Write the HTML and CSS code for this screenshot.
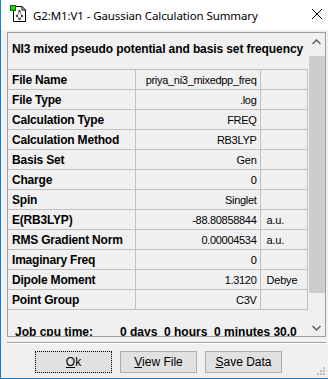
FILE: index.html
```html
<!DOCTYPE html>
<html lang="en">
<head>
    <meta charset="UTF-8">
    <meta name="viewport" content="width=device-width, initial-scale=1.0">
    <title>Gaussian Calculation Summary</title>
    <link rel="stylesheet" href="styles.css">
</head>
<body>
    <div class="window">
        <div class="titlebar">
            <svg class="app-icon" width="18" height="18" viewBox="0 0 18 18">
                <path d="M3.5 1.5 H12 L15.5 5 V16.5 H3.5 Z" fill="#fff" stroke="#000" />
                <path d="M12 1.5 V5 H15.5" fill="none" stroke="#000" />
                <line x1="9.5" y1="6" x2="7" y2="11" stroke="#777" />
                <line x1="9.5" y1="6" x2="12" y2="11" stroke="#777" />
                <line x1="7" y1="11" x2="9.5" y2="14" stroke="#777" />
                <line x1="12" y1="11" x2="9.5" y2="14" stroke="#777" />
                <rect x="8.5" y="5" width="2" height="2" fill="#444" />
                <rect x="6" y="10" width="2" height="2" fill="#444" />
                <rect x="11" y="10" width="2" height="2" fill="#444" />
                <rect x="8.5" y="13" width="2" height="2" fill="#444" />
                <rect x="0.5" y="0.5" width="5" height="5" fill="#1ed21e" stroke="#0a6a0a" />
            </svg>
            <span class="title">G2:M1:V1 - Gaussian Calculation Summary</span>
            <svg class="close" width="10" height="10" viewBox="0 0 10 10">
                <path d="M0 0 L10 10 M10 0 L0 10" stroke="#000" stroke-width="1" />
            </svg>
        </div>

        <div class="client">
            <div class="panel">
                <div class="content">
                    <div class="heading">NI3 mixed pseudo potential and basis set frequency</div>
                    <table class="summary">
                        <tr><td class="label">File Name</td><td class="value">priya_ni3_mixedpp_freq</td><td class="unit"></td></tr>
                        <tr><td class="label">File Type</td><td class="value">.log</td><td class="unit"></td></tr>
                        <tr><td class="label">Calculation Type</td><td class="value">FREQ</td><td class="unit"></td></tr>
                        <tr><td class="label">Calculation Method</td><td class="value">RB3LYP</td><td class="unit"></td></tr>
                        <tr><td class="label">Basis Set</td><td class="value">Gen</td><td class="unit"></td></tr>
                        <tr><td class="label">Charge</td><td class="value">0</td><td class="unit"></td></tr>
                        <tr><td class="label">Spin</td><td class="value">Singlet</td><td class="unit"></td></tr>
                        <tr><td class="label">E(RB3LYP)</td><td class="value">-88.80858844</td><td class="unit">a.u.</td></tr>
                        <tr><td class="label">RMS Gradient Norm</td><td class="value">0.00004534</td><td class="unit">a.u.</td></tr>
                        <tr><td class="label">Imaginary Freq</td><td class="value">0</td><td class="unit"></td></tr>
                        <tr><td class="label">Dipole Moment</td><td class="value">1.3120</td><td class="unit">Debye</td></tr>
                        <tr><td class="label">Point Group</td><td class="value">C3V</td><td class="unit"></td></tr>
                    </table>
                    <div class="cpu">
                        <span class="cpu-label">Job cpu time:</span>
                        <span class="cpu-value">0 days  0 hours  0 minutes 30.0</span>
                    </div>
                </div>
                <div class="scrollbar">
                    <div class="arrow">
                        <svg width="9" height="6" viewBox="0 0 9 6"><polyline points="0.5,5 4.5,1 8.5,5" fill="none" stroke="#606060" stroke-width="1.5" /></svg>
                    </div>
                    <div class="track"><div class="thumb"></div></div>
                    <div class="arrow">
                        <svg width="9" height="6" viewBox="0 0 9 6"><polyline points="0.5,1 4.5,5 8.5,1" fill="none" stroke="#606060" stroke-width="1.5" /></svg>
                    </div>
                </div>
            </div>

            <div class="separator"></div>

            <div class="buttons">
                <button class="btn focused"><u>O</u>k</button>
                <button class="btn"><u>V</u>iew File</button>
                <button class="btn"><u>S</u>ave Data</button>
            </div>

            <svg class="grip" width="10" height="10" viewBox="0 0 10 10">
                <rect x="8" y="2" width="2" height="2" fill="#bcbcbc" />
                <rect x="5" y="5" width="2" height="2" fill="#bcbcbc" />
                <rect x="8" y="5" width="2" height="2" fill="#bcbcbc" />
                <rect x="2" y="8" width="2" height="2" fill="#bcbcbc" />
                <rect x="5" y="8" width="2" height="2" fill="#bcbcbc" />
                <rect x="8" y="8" width="2" height="2" fill="#bcbcbc" />
            </svg>
        </div>
    </div>
</body>
</html>
```

FILE: styles.css
```css
:root {
    --face: #f0f0f0;
    --grid: #c0c0c0;
    --edge: #a0a0a0;
    --accent: #1979ca;
}

* {
    box-sizing: border-box;
}

body {
    margin: 0;
    background: var(--face);
    font-family: "Liberation Sans", Arial, sans-serif;
    color: #000;
}

.window {
    width: 328px;
    height: 379px;
    border-left: 1px solid var(--accent);
    border-bottom: 1px solid var(--accent);
    display: flex;
    flex-direction: column;
}

.titlebar {
    height: 30px;
    background: #fff;
    display: flex;
    align-items: center;
    padding-left: 9px;
}

.app-icon {
    margin-top: -3px;
}

.title {
    margin-left: 5px;
    font-family: "Noto Sans", sans-serif;
    font-size: 11.5px;
    letter-spacing: -0.1px;
    flex-grow: 1;
}

.close {
    margin-right: 6px;
    margin-top: -2px;
}

.client {
    position: relative;
    flex-grow: 1;
    padding: 2px 2px 0 6px;
}

.panel {
    height: 305px;
    border: 1px solid var(--edge);
    display: flex;
}

.content {
    flex-grow: 1;
    overflow: hidden;
}

.heading {
    height: 36px;
    padding-top: 9px;
    line-height: 14px;
    font-size: 12px;
    font-weight: bold;
    letter-spacing: -0.1px;
    text-align: center;
    padding-right: 1px;
}

.summary {
    border-collapse: collapse;
    width: 300px;
    table-layout: fixed;
    border-top: 1px solid var(--grid);
}

.summary td {
    height: 20px;
    padding: 0;
    border-right: 1px solid var(--grid);
    border-bottom: 1px solid var(--grid);
    white-space: nowrap;
    overflow: hidden;
}

.label {
    width: 127px;
    padding-left: 4px !important;
    font-size: 12px;
    font-weight: bold;
    letter-spacing: -0.2px;
}

.value {
    width: 125px;
    padding-right: 3px !important;
    text-align: right;
    font-size: 11px;
    letter-spacing: -0.3px;
}

.unit {
    padding-left: 6px !important;
    font-size: 11px;
    letter-spacing: -0.2px;
}

.cpu {
    margin-top: 15px;
    padding-left: 7px;
    display: flex;
    line-height: 14px;
    font-size: 12px;
    font-weight: bold;
    white-space: pre;
}

.cpu-label {
    width: 105px;
}

.scrollbar {
    width: 17px;
    display: flex;
    flex-direction: column;
}

.arrow {
    height: 17px;
    display: flex;
    align-items: center;
    justify-content: center;
}

.track {
    flex-grow: 1;
    padding: 6px 0 0 1px;
}

.thumb {
    height: 237px;
    background: #cdcdcd;
}

.separator {
    margin-top: 5px;
    height: 2px;
    border-top: 1px solid var(--edge);
    border-bottom: 1px solid #fff;
}

.buttons {
    margin-top: 7px;
    padding-left: 28px;
    display: flex;
    gap: 8px;
}

.btn {
    width: 77px;
    height: 22px;
    padding: 0;
    background: #e1e1e1;
    border: 1px solid #adadad;
    font-family: "Liberation Sans", Arial, sans-serif;
    font-size: 12px;
    color: #000;
}

.btn.focused {
    border: 1px dotted #000;
}

.grip {
    position: absolute;
    right: 3px;
    bottom: 3px;
}
```
